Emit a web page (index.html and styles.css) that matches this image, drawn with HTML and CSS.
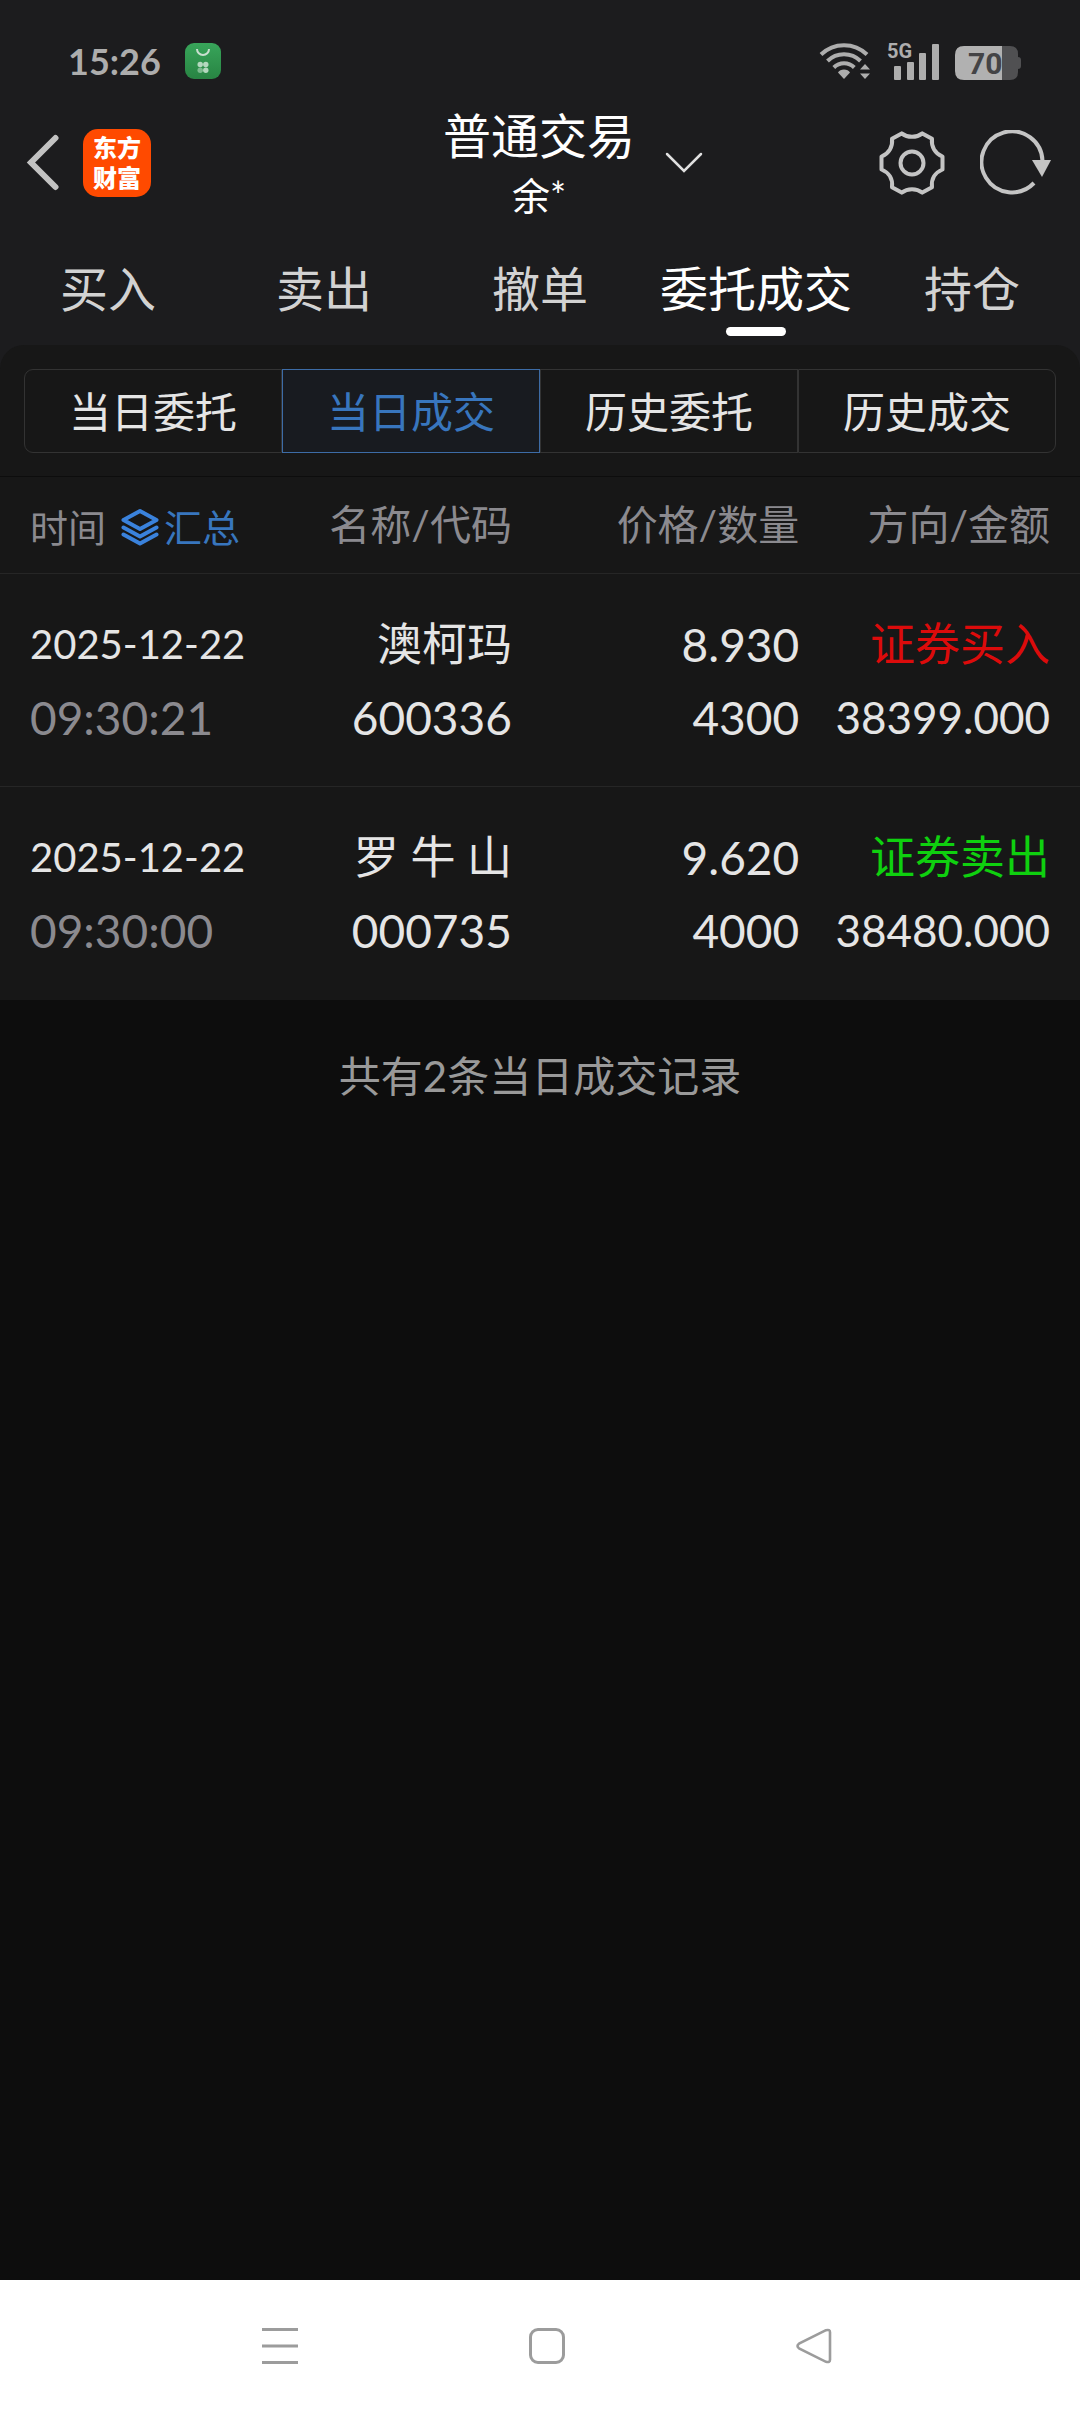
FILE: index.html
```html
<!DOCTYPE html>
<html lang="zh-CN">
<head>
<meta charset="utf-8">
<meta name="viewport" content="width=device-width">
<title>普通交易</title>
<link rel="stylesheet" href="styles.css">
</head>
<body>
<div class="top">
  <div class="status">
    <div class="status-side">
      <time class="clock">15:26</time>
      <svg width="36" height="36" viewBox="0 0 36 36" aria-hidden="true">
        <defs><linearGradient id="leaf" x1="0" y1="0" x2="0" y2="1"><stop offset="0" stop-color="#38a55a"/><stop offset="1" stop-color="#288443"/></linearGradient></defs>
        <rect width="36" height="36" rx="9" fill="url(#leaf)"/>
        <path d="M12 6a6 6 0 0 0 12 0" fill="none" stroke="#c9dfcf" stroke-width="2"/>
        <g fill="#b4d8be"><circle cx="15.200" cy="21.500" r="2.700"/><circle cx="20.800" cy="21.500" r="2.700"/><circle cx="20.800" cy="27.200" r="2.700"/></g>
        <circle cx="15.200" cy="27.200" r="2.700" fill="#7dbb8f"/>
      </svg>
    </div>
    <div class="status-side">
      <svg width="52" height="38" viewBox="0 0 52 38" aria-label="Wi-Fi">
        <g fill="none" stroke="#adadad" stroke-width="4">
          <path d="M2 12.500a33 33 0 0 1 46 0"/>
          <path d="M8.500 19a23.500 23.500 0 0 1 33 0"/>
          <path d="M14.800 25.500a14.500 14.500 0 0 1 20.500 0"/>
        </g>
        <path d="M25 37l-6-6.500c1-2 3.500-3 6-3s5 1 6 3z" fill="#adadad"/>
        <path d="M41 27.500l5-5.500 5 5.500zM41 31.500l5 5.500 5-5.500z" fill="#adadad"/>
      </svg>
      <svg width="54" height="50" viewBox="-2 -6 54 50" aria-label="5G">
        <text x="-1" y="16" class="net">5G</text>
        <g fill="#adadad"><rect x="6" y="24" width="7" height="14" rx="1"/><rect x="19" y="20" width="7" height="18" rx="1"/><rect x="31" y="11" width="7" height="27" rx="1"/><rect x="44" y="2" width="7" height="36" rx="1"/></g>
      </svg>
      <svg width="66" height="38" viewBox="0 0 66 38" aria-label="70%">
        <path d="M8 4h47q8 0 8 8v3q3 0 3 3v6q0 3-3 3v3q0 8-8 8H47V4z" fill="#505052"/>
        <path d="M47 4v34H9q-9 0-9-9V13q0-9 9-9z" fill="#b1b1b1"/>
        <text x="13" y="32" class="charge">70</text>
      </svg>
    </div>
  </div>

  <header class="header">
    <div class="header-left">
      <button class="icon-btn" aria-label="返回">
        <svg width="34" height="58" viewBox="0 0 34 58"><path d="M29.500 4L5 28.500 29.500 53" fill="none" stroke="#c2c2c2" stroke-width="6" stroke-linecap="round" stroke-linejoin="miter"/></svg>
      </button>
      <a class="logo" href="#"><span>东方</span><span>财富</span></a>
    </div>
    <div class="title">
      <h1>普通交易</h1>
      <p>余*</p>
    </div>
    <div class="header-right">
      <button class="icon-btn account" aria-label="切换账户">
        <svg width="38" height="22" viewBox="0 0 38 22"><path d="M2 2l17 17L36 2" fill="none" stroke="#e0e0e0" stroke-width="2.500" stroke-linecap="round"/></svg>
      </button>
      <button class="icon-btn settings" aria-label="设置">
        <svg width="66" height="66" viewBox="-33 -33 66 66" fill="none" stroke="#c4c4c4" stroke-width="4" stroke-linejoin="round">
          <circle r="11.500"/>
          <path d="M-10.300 -29.600C-4.500 -25 4.500 -25 10.300 -29.600L20 -24.200C19 -16.500 23 -9.500 30.500 -6.500L30.500 6.500C23 9.500 19 16 20 24.200L10.300 29.600C4.500 25 -4.500 25 -10.300 29.600L-20 24.200C-19 16 -23 9.500 -30.500 6.500L-30.500 -6.500C-23 -9.500 -19 -16.500 -20 -24.200Z"/>
        </svg>
      </button>
      <button class="icon-btn" aria-label="刷新">
        <svg width="72" height="66" viewBox="0 0 72 66"><path d="M62.500 31A30.500 30.500 0 1 0 54 53" fill="none" stroke="#c4c4c4" stroke-width="4"/><path d="M52 30h19L62 47z" fill="#c4c4c4"/></svg>
      </button>
    </div>
  </header>

  <nav class="tabs">
    <a href="#">买入</a>
    <a href="#">卖出</a>
    <a href="#">撤单</a>
    <a href="#" class="on" aria-current="page">委托成交</a>
    <a href="#">持仓</a>
  </nav>
</div>

<main>
  <div class="panel-back">
    <section class="panel">
      <div class="segments">
        <button>当日委托</button>
        <button class="on">当日成交</button>
        <button>历史委托</button>
        <button>历史成交</button>
      </div>
      <table class="deals">
        <colgroup><col class="c-time"><col class="c-name"><col class="c-price"><col class="c-side"></colgroup>
        <thead>
          <tr>
            <th><div class="time-head">时间<button class="summary"><svg width="38" height="38" viewBox="0 0 38 38" fill="none" stroke="#3a82dc" stroke-width="4" stroke-linejoin="round" stroke-linecap="round"><path d="M19 3L35.500 12 19 21 2.500 12z"/><path d="M2.500 19.500L19 28.500 35.500 19.500"/><path d="M2.500 26.500L19 35.500 35.500 26.500"/></svg>汇总</button></div></th>
            <th>名称/代码</th>
            <th>价格/数量</th>
            <th>方向/金额</th>
          </tr>
        </thead>
        <tbody>
          <tr>
            <td><div class="date">2025-12-22</div><div class="clock-time">09:30:21</div></td>
            <td><div>澳柯玛</div><div>600336</div></td>
            <td><div>8.930</div><div>4300</div></td>
            <td><div class="buy">证券买入</div><div class="amount">38399.000</div></td>
          </tr>
          <tr>
            <td><div class="date">2025-12-22</div><div class="clock-time">09:30:00</div></td>
            <td><div>罗 牛 山</div><div>000735</div></td>
            <td><div>9.620</div><div>4000</div></td>
            <td><div class="sell">证券卖出</div><div class="amount">38480.000</div></td>
          </tr>
        </tbody>
      </table>
    </section>
  </div>
  <p class="count">共有2条当日成交记录</p>
</main>

<footer class="sysnav">
  <button class="icon-btn" aria-label="最近任务"><svg width="36" height="36" viewBox="0 0 36 36"><path d="M0 1.500h36M0 18h36M0 34.500h36" stroke="#9c9c9c" stroke-width="3"/></svg></button>
  <button class="icon-btn" aria-label="主页"><svg width="36" height="36" viewBox="0 0 36 36"><rect x="1.500" y="1.500" width="33" height="33" rx="7.500" fill="none" stroke="#9c9c9c" stroke-width="3"/></svg></button>
  <button class="icon-btn" aria-label="返回上一页"><svg width="36" height="36" viewBox="0 0 36 36"><path d="M30 2.200L3 15.700q-3 2.300 0 4.600L30 33.800q4 1 4-2V4.200q0-3-4-2z" fill="none" stroke="#9c9c9c" stroke-width="2.600"/></svg></button>
</footer>
</body>
</html>
```
FILE: styles.css
```css
* { box-sizing: border-box; margin: 0; padding: 0; }

body {
  min-height: 100vh;
  display: flex;
  flex-direction: column;
  background: #0d0d0d;
  color: #e5e5e5;
  font-family: Lato, "Noto Sans CJK SC", sans-serif;
  font-size: 42px;
}

button { border: 0; background: none; color: inherit; font: inherit; }
a { color: inherit; text-decoration: none; }
svg { display: block; }
.icon-btn { display: flex; align-items: center; justify-content: center; }

.top { background: #1c1c1e; }

/* phone status bar */
.status {
  display: flex;
  justify-content: space-between;
  padding: 41px 59px 23px 68px;
}
.status-side { display: flex; align-items: center; height: 40px; gap: 15px; }
.status-side:first-child { gap: 24px; }
.clock { font-weight: 700; font-size: 36px; line-height: 40px; color: #adadad; }
.net { font: 700 20px Roboto, sans-serif; fill: #adadad; }
.charge { font: 700 30px Roboto, sans-serif; fill: #444446; }

/* app header */
.header {
  display: grid;
  grid-template-columns: 1fr auto 1fr;
  align-items: center;
  padding: 0 28px 0 26px;
}
.header-left, .header-right { display: flex; align-items: center; }
.header-left { gap: 23px; }
.header-right { gap: 35px; }
.logo {
  display: flex;
  flex-direction: column;
  align-items: center;
  justify-content: center;
  width: 68px;
  height: 68px;
  border-radius: 15px;
  background: #ff4a00;
  color: #fff;
  font-size: 24px;
  font-weight: 900;
  line-height: 30px;
}
.title { color: #fff; text-align: center; }
.title h1 { font-size: 48px; font-weight: 400; line-height: 64px; }
.title p { font-size: 38px; line-height: 54px; }
.account { margin-left: 30px; }
.settings { margin-left: auto; }

.tabs {
  display: grid;
  grid-template-columns: repeat(5, 1fr);
  padding: 31px 0 9px;
  color: #d2d2d2;
  font-size: 48px;
  line-height: 72px;
}
.tabs a { display: flex; flex-direction: column; align-items: center; white-space: nowrap; }
.tabs .on { color: #fff; }
.tabs .on::after {
  content: "";
  width: 60px;
  height: 9px;
  margin-top: 2px;
  border-radius: 5px;
  background: #fff;
}

main { flex: 1; }
.panel-back { background: #1c1c1e; }
.panel { padding-top: 24px; border-radius: 24px 24px 0 0; background: #171717; }

.segments {
  display: grid;
  grid-template-columns: repeat(4, 1fr);
  margin: 0 24px 23px;
}
.segments button { padding-top: 2px; border: 1px solid #333; line-height: 80px; }
.segments button:first-child { border-radius: 9px 0 0 9px; }
.segments button:last-child { border-radius: 0 9px 9px 0; }
.segments .on { border-color: #3d6ca6; background: #181b20; color: #3876be; }

/* deals table */
.deals {
  width: 100%;
  table-layout: fixed;
  border-collapse: separate;
  border-spacing: 0;
  border-top: 1px solid #0d0d0d;
  font-size: 45px;
  line-height: 73px;
}
.c-time, .c-side { width: 26%; }
.c-name { width: 21.4%; }
.c-price { width: 26.6%; }
.deals th {
  border-bottom: 1px solid #262626;
  color: #8b8a8f;
  font-size: 41px;
  font-weight: 400;
  line-height: 96px;
  vertical-align: middle;
}
.deals th, .deals td { text-align: right; white-space: nowrap; }
.deals td { padding: 34px 0 32px; border-bottom: 1px solid #262626; vertical-align: top; }
.deals tr:last-child td { border-bottom-color: #171717; }
.deals th:first-child, .deals td:first-child { padding-left: 30px; text-align: left; }
.deals th:last-child, .deals td:last-child { padding-right: 30px; }
.time-head {
  display: flex;
  align-items: center;
  gap: 15px;
  padding-top: 4px;
  font-size: 38px;
  line-height: 60px;
}
.summary { display: flex; align-items: center; gap: 5px; color: #3876be; }
.deals td:nth-child(2) div:last-child, .deals td:nth-child(3) div { font-size: 46px; }
.date { font-size: 40px; }
.clock-time { color: #8b8a8f; font-size: 46px; }
.amount { font-size: 44px; }
.buy { color: #dc0b0b; }
.sell { color: #0fd00f; }

.count { padding-top: 46px; color: #999; line-height: 60px; text-align: center; }

/* phone navigation keys */
.sysnav {
  display: grid;
  grid-template-columns: repeat(3, 1fr);
  height: 132px;
  padding: 0 132px 0 146px;
  background: #fff;
}
```
